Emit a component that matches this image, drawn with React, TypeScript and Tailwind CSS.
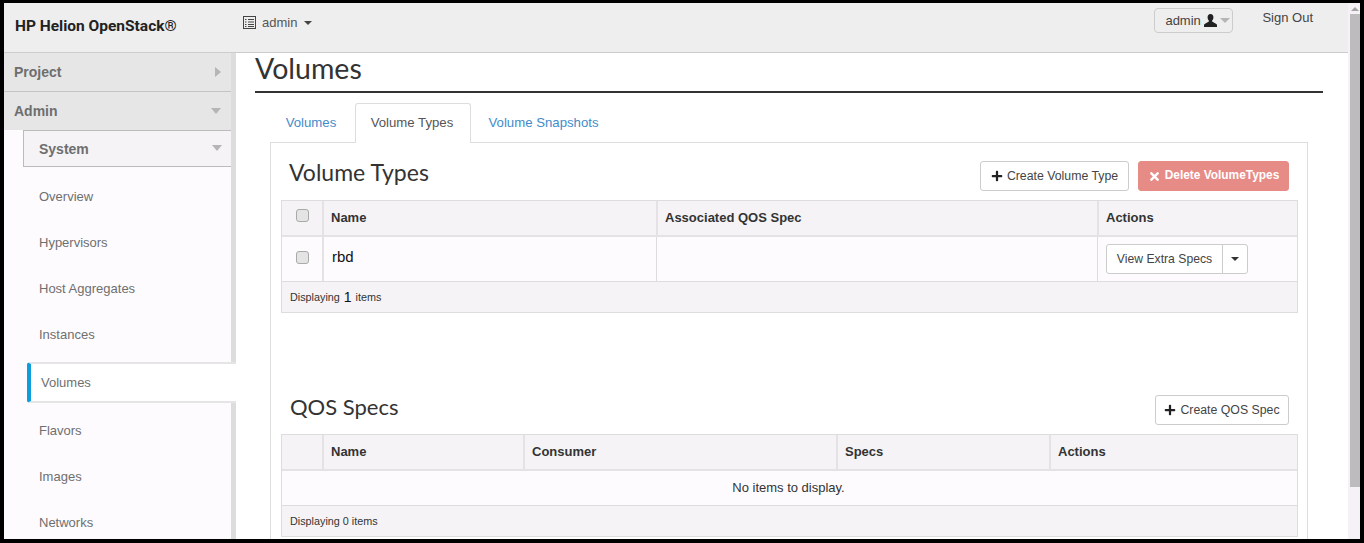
import React from 'react';
import { FaPlus, FaTimes } from 'react-icons/fa';

const sans = "font-['Liberation_Sans',Arial,sans-serif]";
const brand = "font-['Lato',sans-serif]";

const Caret = ({ className = '' }: { className?: string }) => (
  <span className={`inline-block h-0 w-0 border-x-[4px] border-t-[4px] border-x-transparent ${className}`} />
);

const Checkbox = ({ className = '' }: { className?: string }) => (
  <span className={`inline-block h-[13px] w-[13px] rounded-[3px] border border-[#a9a9a9] bg-[#e4e4e4] ${className}`} />
);

// glyphicon-list-alt
const ListIcon = () => (
  <svg width="13" height="13" viewBox="0 0 13 13" className="text-[#444]">
    <rect x="0.5" y="0.5" width="12" height="12" fill="none" stroke="currentColor" />
    <path d="M2 3h1.5v1H2zM5 3h6v1H5zM2 5.5h1.5v1H2zM5 5.5h6v1H5zM2 8h1.5v1H2zM5 8h6v1H5zM2 10h1.5v1H2zM5 10h6v1H5z" fill="currentColor" />
  </svg>
);

const UserIcon = () => (
  <svg width="13" height="13" viewBox="0 0 12 12" className="text-[#222]">
    <path d="M6 0C4.2 0 3.3 1.3 3.3 3c0 1.300.5 2.400 1.200 3.100v.9L.6 9.200C.2 9.500 0 10 0 10.500V12h12v-1.500c0-.5-.2-1-.6-1.300L7.500 7v-.9C8.200 5.400 8.700 4.300 8.700 3 8.700 1.300 7.800 0 6 0z" fill="currentColor" />
  </svg>
);

const SideHeader = ({ label, open }: { label: string; open: boolean }) => (
  <div className={`flex items-center justify-between bg-[#e6e6e6] pl-[10px] pr-[9px] ${open ? 'h-[38px]' : 'h-[39px] border-b border-[#c4c4c4]'}`}>
    <span className="text-[14px] font-bold text-[#6e6e6e]">{label}</span>
    {open ? (
      <Caret className="mr-[1px] border-x-[5px] border-t-[6px] border-t-[#b5b5b5]" />
    ) : (
      <span className="mr-[1px] inline-block h-0 w-0 border-y-[5px] border-l-[6px] border-y-transparent border-l-[#b5b5b5]" />
    )}
  </div>
);

const NavItem = ({ label }: { label: string }) => (
  <div className="flex h-[46px] items-center pl-[35px] text-[13px] text-[#6f6f6f]">{label}</div>
);

const Sidebar = () => (
  <div className="h-full w-[232px] shrink-0 border-r-[5px] border-[#dddddd] bg-[#fdfbfe]">
    <SideHeader label="Project" open={false} />
    <SideHeader label="Admin" open />
    <div className="ml-[19px] flex h-[37px] items-center justify-between border border-r-0 border-[#bbbbbb] bg-[#f5f3f6] pl-[15px] pr-[9px] pt-[1px]">
      <span className="text-[14px] font-bold text-[#6e6e6e]">System</span>
      <Caret className="-mt-[2px] border-x-[5px] border-t-[6px] border-t-[#b5b5b5]" />
    </div>
    <div className="mt-[7px]">
      <NavItem label="Overview" />
      <NavItem label="Hypervisors" />
      <NavItem label="Host Aggregates" />
      <NavItem label="Instances" />
    </div>
    <div className="relative z-10 -mr-[5px] ml-[23px] mt-[4px] flex h-[41px] items-center rounded-l-[3px] border-y-2 border-l-4 border-y-[#e5e5e5] border-l-[#0d9ddb] bg-white pl-[10px] text-[13px] text-[#6f6f6f]">
      Volumes
    </div>
    <div className="mt-[5px]">
      <NavItem label="Flavors" />
      <NavItem label="Images" />
      <NavItem label="Networks" />
    </div>
  </div>
);

const Button = ({ icon, label, className = '' }: { icon: React.ReactNode; label: string; className?: string }) => (
  <div className={`flex h-[30px] items-center justify-center gap-[4px] rounded-[3px] border ${className}`}>
    {icon}
    <span>{label}</span>
  </div>
);

const Th = ({ label, first = false }: { label?: string; first?: boolean }) => (
  <div className={`flex items-center pl-[7px] text-[13px] font-bold text-[#333] ${first ? '' : 'border-l-2 border-[#e4e2e5]'}`}>
    {label}
  </div>
);

const Footer = ({ children }: { children: React.ReactNode }) => (
  <div className="flex h-[31px] items-center border-t border-[#dddddd] bg-[#f5f3f6] pl-[8px] text-[10.8px] text-[#333]">
    {children}
  </div>
);

const plainButton = 'border-[#cccccc] bg-white text-[12.3px] text-[#444]';

const Main = () => (
  <div className="min-w-0 flex-1 bg-white pl-[19px] pr-[25px]">
    <div className="flex h-[40px] items-center border-b-2 border-[#333333] pb-[8px]">
      <h1 className={`${brand} text-[28.5px] leading-[30px] text-[#333]`}>Volumes</h1>
    </div>

    <div className="mx-[15px] mt-[10px]">
      <div className="relative z-10 -mb-px flex h-[40px] pl-[1px] text-[13.2px] text-[#428bca]">
        <div className="flex w-[84px] items-center justify-center pr-[4px]">Volumes</div>
        <div className="flex w-[116px] items-center justify-center rounded-t-[3px] border border-b-0 border-[#dddddd] bg-white pb-[2px] pr-[2px] text-[#555]">
          Volume Types
        </div>
        <div className="flex w-[144px] items-center justify-center pl-[1px]">Volume Snapshots</div>
      </div>

      <div className="border border-b-0 border-[#dddddd] pb-[20px] pl-[10px] pr-[9px]">
        <div className="flex h-[57px] items-center justify-between pl-[8px] pr-[9px] pt-[9px]">
          <h2 className={`${brand} -mt-[7px] text-[23px] text-[#333]`}>Volume Types</h2>
          <div className="flex gap-[9px]">
            <Button className={`w-[149px] ${plainButton}`} icon={<FaPlus className="h-[12px] w-[12px] text-[#222]" />} label="Create Volume Type" />
            <Button
              className="w-[151px] border-[#e78b87] bg-[#e78b87] text-[11.9px] font-bold text-white"
              icon={<FaTimes className="h-[13px] w-[13px]" />}
              label="Delete VolumeTypes"
            />
          </div>
        </div>

        <div className="border border-[#dddddd]">
          <div className="grid h-[36px] grid-cols-[40px_334px_441px_1fr] border-b-2 border-[#e4e2e5] bg-[#f5f3f6]">
            <div className="flex items-center justify-center"><Checkbox className="mb-[6px]" /></div>
            <Th label="Name" />
            <Th label="Associated QOS Spec" />
            <Th label="Actions" />
          </div>
          <div className="grid h-[44px] grid-cols-[40px_334px_441px_1fr] bg-[#fdfbfe]">
            <div className="flex items-center justify-center"><Checkbox className="mb-[4px]" /></div>
            <div className="flex items-center border-l-2 border-[#e4e2e5] pb-[4px] pl-[8px] text-[15px] text-[#111]">rbd</div>
            <div className="border-l border-[#dddddd]" />
            <div className="flex items-center border-l border-[#dddddd] pl-[8px]">
              <div className="flex h-[30px] items-center rounded-[3px] border border-[#cccccc] bg-white text-[12.2px] text-[#444]">
                <span className="flex h-full w-[116px] items-center justify-center border-r border-[#cccccc]">View Extra Specs</span>
                <span className="flex w-[24px] justify-center"><Caret className="border-t-[#333]" /></span>
              </div>
            </div>
          </div>
          <Footer>
            Displaying <span className="mx-[4px] text-[14px] leading-none text-[#111]">1</span> items
          </Footer>
        </div>

        <div className="mt-[77px] flex h-[40px] items-center justify-between pl-[9px] pr-[9px]">
          <h2 className={`${brand} mb-[8px] text-[22px] text-[#333]`}>QOS Specs</h2>
          <Button className={`w-[134px] ${plainButton}`} icon={<FaPlus className="h-[12px] w-[12px] text-[#222]" />} label="Create QOS Spec" />
        </div>

        <div className="mt-[4px] border border-[#dddddd]">
          <div className="grid h-[36px] grid-cols-[40px_201px_313px_213px_1fr] border-b-2 border-[#e4e2e5] bg-[#f5f3f6]">
            <Th first />
            <Th label="Name" />
            <Th label="Consumer" />
            <Th label="Specs" />
            <Th label="Actions" />
          </div>
          <div className="flex h-[34px] items-center justify-center bg-[#fdfbfe] pr-[2px] text-[13px] text-[#333]">No items to display.</div>
          <Footer>Displaying 0 items</Footer>
        </div>
      </div>
    </div>
  </div>
);

const Scrollbar = () => (
  <div className="flex h-full w-[12px] shrink-0 flex-col bg-[#f5f1f6]">
    <div className="flex h-[11px] items-center justify-center pl-[2px]">
      <span className="inline-block h-0 w-0 border-x-[4px] border-b-[4px] border-x-transparent border-b-[#a3a3a3]" />
    </div>
    <div className="ml-[2px] h-[473px] bg-[#bcbcbc]" />
  </div>
);

export default function App() {
  return (
    <div className={`${sans} h-[543px] w-[1364px] overflow-hidden border-b-4 border-l-4 border-r-4 border-t-[3px] border-black bg-white`}>
      <div className="flex h-full">
        <div className="flex min-w-0 flex-1 flex-col">
          <header className="flex h-[50px] shrink-0 items-start border-b border-[#cccccc] bg-[#eeeeee]">
            <div className="mt-[12px] w-[239px] pl-[11px] font-['Roboto',sans-serif] text-[15.5px] font-bold text-[#222]">
              HP Helion OpenStack®
            </div>
            <div className="mt-[10px] flex items-center gap-[6px] text-[13px] text-[#555]">
              <ListIcon />
              <span>admin</span>
              <Caret className="ml-[1px] border-t-[#444]" />
            </div>
            <div className="ml-auto mt-[5px] flex h-[25px] w-[79px] items-center gap-[3px] rounded-[4px] border border-[#cccccc] pl-[10px] text-[13px] text-[#444]">
              <span>admin</span>
              <UserIcon />
              <Caret className="border-x-[5px] border-t-[5px] border-t-[#b5b5b5]" />
            </div>
            <div className="ml-[29px] mr-[35px] mt-[5px] text-[13px] text-[#444]">Sign Out</div>
          </header>
          <div className="flex min-h-0 flex-1 overflow-hidden">
            <Sidebar />
            <Main />
          </div>
        </div>
        <Scrollbar />
      </div>
    </div>
  );
}
